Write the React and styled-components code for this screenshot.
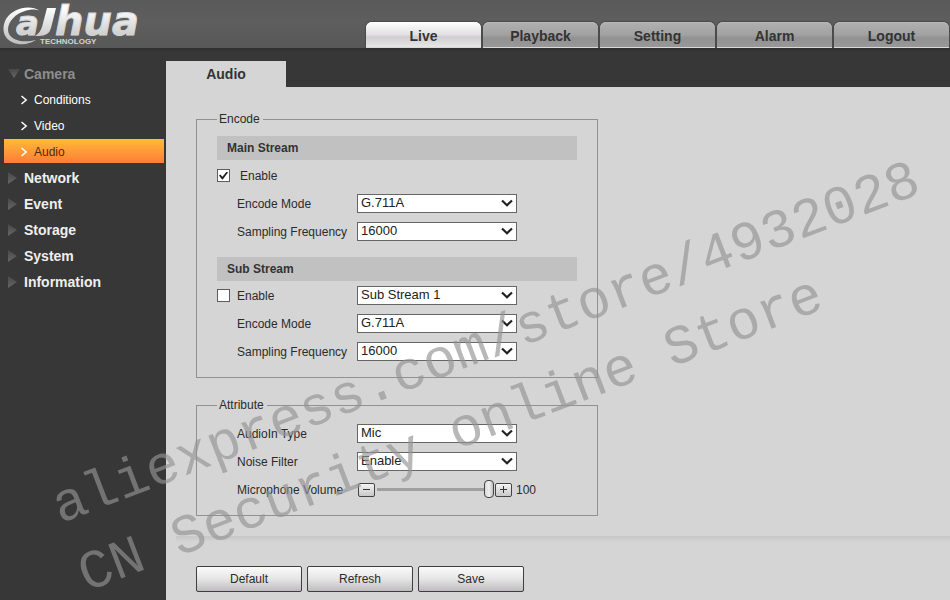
import React, { useState } from "react";
import styled, { createGlobalStyle } from "styled-components";

const GlobalStyle = createGlobalStyle`
  * { box-sizing: border-box; }
  body { margin: 0; background: #373737; }
  body, button, input, select {
    font-family: "Liberation Sans", Arial, sans-serif;
    font-size: 12px;
  }
`;

const Page = styled.div`
  position: relative;
  display: flex;
  flex-direction: column;
  min-height: 100vh;
  overflow: hidden;
  background: #373737;
  color: #2b2b2b;
`;

const Header = styled.header`
  display: flex;
  justify-content: space-between;
  align-items: flex-end;
  height: 48px;
  padding: 0 1px 0 2px;
  background: linear-gradient(#5a5a5a, #5e5e5e 50%, #575757);
`;

const Logo = styled.svg`
  flex: none;
  align-self: flex-start;
  width: 144px;
  height: 48px;
`;

const TopTabs = styled.nav`
  display: flex;
  gap: 2px;
`;

const TopTab = styled.button`
  width: 115px;
  height: 26px;
  padding: 2px 0 0;
  border: 0;
  border-bottom: 1px solid #d8d8d8;
  border-radius: 6px 6px 0 0;
  box-shadow: inset 0 1px 0 ${(p) => (p.$active ? "#ffffff" : "#b8b8b8")}, 0 0 1px 1px #4a4a4a;
  background: ${(p) =>
    p.$active
      ? "linear-gradient(#ffffff, #e2e0e2 50%, #d0ced0 60%, #e6e6e6)"
      : "linear-gradient(#b0b0b0, #a2a2a2 50%, #929292 65%, #989898)"};
  color: #333;
  font-size: 14px;
  font-weight: bold;
`;

const Body = styled.div`
  display: flex;
  flex: 1;
  padding-top: 13px;
  background: linear-gradient(#2f2f2f, #373737 4px);
`;

const Sidebar = styled.nav`
  flex: none;
  width: 166px;
  padding: 0 2px 0 4px;
`;

const MenuItem = styled.a`
  display: flex;
  align-items: center;
  gap: 4px;
  height: 24px;
  margin-bottom: 2px;
  padding: 2px 0 0 4px;
  color: ${(p) => (p.$open ? "#8d8d8d" : "#efefef")};
  font-size: 14px;
  font-weight: bold;
  text-decoration: none;
`;

const SubItem = styled.a`
  display: flex;
  align-items: center;
  gap: 6px;
  height: 24px;
  margin-bottom: 2px;
  padding: 2px 0 0 16px;
  background: ${(p) => (p.$active ? "linear-gradient(#ffbb38, #ff7c38)" : "none")};
  color: ${(p) => (p.$active ? "#4a2d10" : "#ffffff")};
  text-decoration: none;
`;

const MenuIcon = styled.svg`
  width: 12px;
  height: 12px;
  fill: url(#menu-arrow);
`;

const SubIcon = styled.svg`
  width: 8px;
  height: 10px;
  fill: none;
  stroke: #fff;
  stroke-width: 1.5;
`;

const Content = styled.main`
  display: flex;
  flex: 1;
  flex-direction: column;
  min-width: 0;
`;

const PageTab = styled.h1`
  width: 120px;
  margin: 0;
  background: #d5d5d5;
  color: #333;
  font-size: 14px;
  line-height: 26px;
  text-align: center;
`;

const Panel = styled.form`
  flex: 1;
  padding: 25px 0 8px 30px;
  background: #d5d5d5;
`;

const Group = styled.fieldset`
  max-width: 402px;
  min-width: 0;
  margin: 0 0 20px;
  padding: ${(p) => (p.$compact ? "7px" : "10px")} 20px 12px;
  border: 1px solid #919191;
`;

const GroupTitle = styled.legend`
  height: 14px;
  padding: 0 3px 0 2px;
  line-height: 14px;
`;

const Band = styled.h2`
  margin: ${(p) => (p.$spaced ? "12px" : "0")} 0 ${(p) => (p.$spaced ? "0" : "1px")};
  padding: 0 10px;
  background: #c1c1c1;
  color: #333;
  font-size: 12px;
  line-height: 24px;
`;

const Row = styled.div`
  display: grid;
  grid-template-columns: 140px 1fr;
  align-items: center;
  height: 28px;
`;

const Label = styled.label`
  padding: 2px 0 0 20px;
`;

const CheckLabel = styled.label`
  display: flex;
  align-items: center;
  gap: ${(p) => (p.$wide ? "10px" : "7px")};
  padding-top: 1px;
`;

const CheckBox = styled.input`
  appearance: none;
  display: grid;
  place-items: center;
  width: 13px;
  height: 13px;
  margin: 0;
  border: 1px solid #5c5c5c;
  background: #fff;

  &:checked::before {
    content: "";
    width: 9px;
    height: 8px;
    background: #222;
    clip-path: polygon(0 50%, 14% 38%, 38% 66%, 86% 0, 100% 14%, 42% 100%, 34% 100%);
  }
`;

const SelectBox = styled.div`
  display: grid;
  align-items: center;
  width: 160px;
`;

const NativeSelect = styled.select`
  grid-area: 1 / 1;
  appearance: none;
  height: 19px;
  padding: 0 20px 2px 3px;
  border: 1px solid #666;
  border-radius: 0;
  background: #fff;
  color: #222;
  font-size: 13px;
`;

const Chevron = styled.svg`
  grid-area: 1 / 1;
  justify-self: end;
  width: 12px;
  height: 8px;
  margin-right: 4px;
  fill: none;
  stroke: #222;
  stroke-width: 2.2;
  pointer-events: none;
`;

const VolumeControl = styled.div`
  display: flex;
  align-items: center;
  padding: 1px 0 0 1px;
`;

const StepButton = styled.button`
  display: grid;
  place-items: center;
  width: 17px;
  height: 14px;
  padding: 0;
  border: 1px solid #444;
  border-radius: 2px;
  background: linear-gradient(#f4f4f4, #c8c8c8);
`;

const StepIcon = styled.svg`
  width: 9px;
  height: 9px;
  stroke: #333;
  stroke-width: 1;
`;

const Slider = styled.input`
  appearance: none;
  width: 117px;
  height: 18px;
  margin: 0 1px 0 2px;
  background: none;

  &::-webkit-slider-runnable-track {
    height: 3px;
    background: #a0a0a0;
  }

  &::-webkit-slider-thumb {
    appearance: none;
    width: 10px;
    height: 18px;
    margin-top: -8px;
    border: 1px solid #444;
    border-radius: 4px;
    background: linear-gradient(90deg, #dadada, #f0f0f0 50%, #c0c0c0);
  }
`;

const VolumeValue = styled.output`
  margin-left: 4px;
`;

const Divider = styled.hr`
  height: 6px;
  margin: 0 0 24px -20px;
  border: 0;
  border-top: 1px solid #c9c9c9;
  background: linear-gradient(#c9c9c9, #d5d5d5);
`;

const Actions = styled.div`
  display: flex;
  gap: 5px;
`;

const ActionButton = styled.button`
  width: 106px;
  height: 26px;
  padding: 0;
  border: 1px solid #3e3e3e;
  border-radius: 2px;
  background: linear-gradient(#fbfbfb, #e6e5e6 50%, #bebcbe);
  color: #2b2b2b;
`;

const WatermarkLayer = styled.div`
  position: absolute;
  inset: 0;
  overflow: hidden;
  pointer-events: none;
`;

const Watermark = styled.div`
  position: absolute;
  left: 42px;
  top: 476px;
  transform: rotate(-21deg);
  transform-origin: 0 0;
  color: rgba(147, 147, 147, 0.66);
  font-family: "Liberation Mono", monospace;
  font-size: 55px;
  line-height: 73px;
  white-space: pre;
`;

const sections = ["Network", "Event", "Storage", "System", "Information"];

function Brand() {
  return (
    <Logo viewBox="0 0 144 48" role="img" aria-label="alhua technology">
      <defs>
        <linearGradient id="silver" x1="0" y1="8" x2="0" y2="44" gradientUnits="userSpaceOnUse">
          <stop offset="0" stopColor="#ffffff" />
          <stop offset="0.5" stopColor="#dedede" />
          <stop offset="1" stopColor="#bdbdbd" />
        </linearGradient>
        <linearGradient id="menu-arrow" x1="0" y1="0" x2="0" y2="1">
          <stop offset="0" stopColor="#484848" />
          <stop offset="1" stopColor="#666666" />
        </linearGradient>
      </defs>
      <g fill="url(#silver)" fontFamily="DejaVu Sans" fontWeight="bold" fontStyle="italic">
        <path d="M38 11C28 4 11 8 4 19C-2 31 3 42 16 44C23 45 29 43 34 40C22 43 11 41 7 34C3 25 12 14 23 11C29 9 34 9 38 11Z" />
        <text x="14" y="35" fontSize="34" stroke="#d6d6d6" strokeWidth="1">a</text>
        <path d="M45 8H54L49 28Q47 36 37 36H33Q38 33 40 27Z" />
        <text x="53" y="35" fontSize="40" stroke="#d6d6d6" strokeWidth="1">hua</text>
      </g>
      <text x="38" y="44" fill="#d4d4d4" fontFamily="Liberation Sans" fontWeight="bold" fontSize="8">
        TECHNOLOGY
      </text>
    </Logo>
  );
}

function SelectRow({ id, label, value, children }) {
  return (
    <Row>
      {children || <Label htmlFor={id}>{label}</Label>}
      <SelectBox>
        <NativeSelect id={id} aria-label={children ? label : undefined} defaultValue={value}>
          <option>{value}</option>
        </NativeSelect>
        <Chevron viewBox="0 0 12 8">
          <path d="M1 1.5L6 6.2L11 1.5" />
        </Chevron>
      </SelectBox>
    </Row>
  );
}

export default function App() {
  const [volume, setVolume] = useState(100);
  return (
    <>
      <GlobalStyle />
      <Page>
        <Header>
          <Brand />
          <TopTabs>
            {["Live", "Playback", "Setting", "Alarm", "Logout"].map((name) => (
              <TopTab key={name} $active={name === "Live"}>{name}</TopTab>
            ))}
          </TopTabs>
        </Header>
        <Body>
          <Sidebar>
            <MenuItem href="#camera" $open>
              <MenuIcon viewBox="0 0 12 12"><path d="M0 1H12L6 10Z" /></MenuIcon>
              Camera
            </MenuItem>
            {["Conditions", "Video", "Audio"].map((name) => (
              <SubItem key={name} href={`#${name}`} $active={name === "Audio"}>
                <SubIcon viewBox="0 0 8 10"><path d="M1.5 1L6.2 5L1.5 9" /></SubIcon>
                {name}
              </SubItem>
            ))}
            {sections.map((name) => (
              <MenuItem key={name} href={`#${name}`}>
                <MenuIcon viewBox="0 0 12 12"><path d="M0 0V12L9 6Z" /></MenuIcon>
                {name}
              </MenuItem>
            ))}
          </Sidebar>
          <Content>
            <PageTab>Audio</PageTab>
            <Panel onSubmit={(e) => e.preventDefault()}>
              <Group>
                <GroupTitle>Encode</GroupTitle>
                <Band>Main Stream</Band>
                <Row>
                  <CheckLabel $wide>
                    <CheckBox type="checkbox" defaultChecked />
                    Enable
                  </CheckLabel>
                </Row>
                <SelectRow id="main-mode" label="Encode Mode" value="G.711A" />
                <SelectRow id="main-rate" label="Sampling Frequency" value="16000" />
                <Band $spaced>Sub Stream</Band>
                <SelectRow id="sub-stream" label="Sub stream" value="Sub Stream 1">
                  <CheckLabel>
                    <CheckBox type="checkbox" />
                    Enable
                  </CheckLabel>
                </SelectRow>
                <SelectRow id="sub-mode" label="Encode Mode" value="G.711A" />
                <SelectRow id="sub-rate" label="Sampling Frequency" value="16000" />
              </Group>
              <Group $compact>
                <GroupTitle>Attribute</GroupTitle>
                <SelectRow id="audio-in" label="AudioIn Type" value="Mic" />
                <SelectRow id="noise" label="Noise Filter" value="Enable" />
                <Row>
                  <Label htmlFor="volume">Microphone Volume</Label>
                  <VolumeControl>
                    <StepButton type="button" aria-label="Decrease" onClick={() => setVolume(Math.max(0, volume - 1))}>
                      <StepIcon viewBox="0 0 9 9"><path d="M1 4.5H8" /></StepIcon>
                    </StepButton>
                    <Slider
                      id="volume"
                      type="range"
                      min="0"
                      max="100"
                      value={volume}
                      onChange={(e) => setVolume(Number(e.target.value))}
                    />
                    <StepButton type="button" aria-label="Increase" onClick={() => setVolume(Math.min(100, volume + 1))}>
                      <StepIcon viewBox="0 0 9 9"><path d="M1 4.5H8M4.5 1V8" /></StepIcon>
                    </StepButton>
                    <VolumeValue htmlFor="volume">{volume}</VolumeValue>
                  </VolumeControl>
                </Row>
              </Group>
              <Divider />
              <Actions>
                <ActionButton type="button">Default</ActionButton>
                <ActionButton type="button">Refresh</ActionButton>
                <ActionButton type="submit">Save</ActionButton>
              </Actions>
            </Panel>
          </Content>
        </Body>
        <WatermarkLayer>
          <Watermark>{"aliexpress.com/store/4932028\nCN Security online Store"}</Watermark>
        </WatermarkLayer>
      </Page>
    </>
  );
}
